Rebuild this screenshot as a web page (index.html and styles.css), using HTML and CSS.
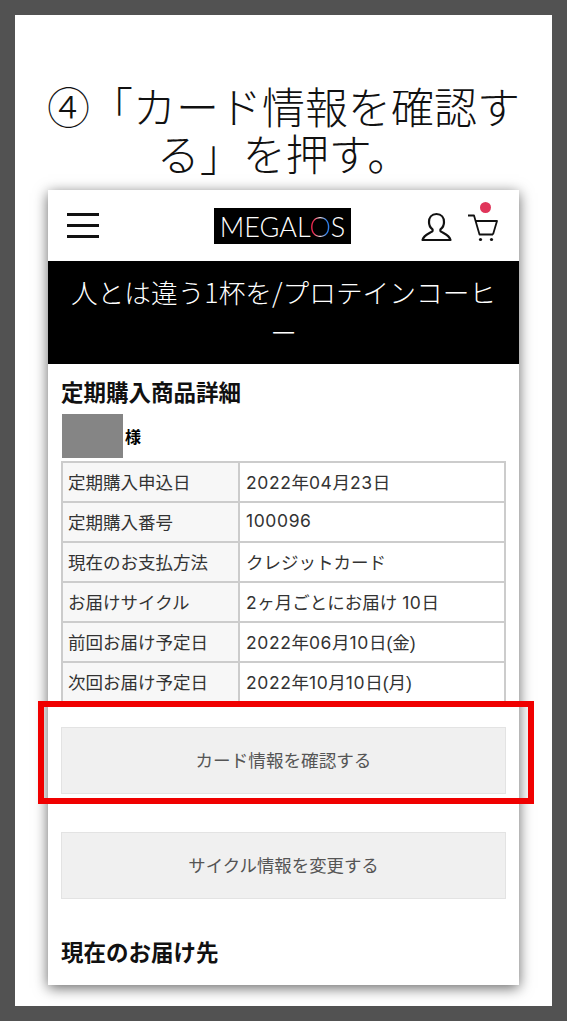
FILE: index.html
```html
<!DOCTYPE html>
<html lang="ja">
<head>
    <meta charset="UTF-8">
    <meta name="viewport" content="width=device-width, initial-scale=1.0">
    <title>カード情報を確認する</title>
    <link rel="stylesheet" href="styles.css">
</head>
<body>
<div class="slide">
    <h1 class="slide-title">④「カード情報を確認する」を押す。</h1>

    <div class="phone">
        <header class="site-header">
            <div class="menu-icon"><span></span><span></span><span></span></div>
            <div class="logo">MEGAL<span class="logo-o">O</span>S</div>
            <div class="header-icons">
                <svg class="user-icon" width="31" height="30" viewBox="0 0 31 30" fill="none" stroke="#111" stroke-width="2.2" stroke-linejoin="round">
                    <path d="M15.5 2C10.500 2 8 5.800 8 10c0 3.200 1.400 5.700 3.300 7.200.5.400.5 1.800-.3 2.400C7.500 21.800 2.800 23 1.500 28h28c-1.300-5-6-6.200-9.500-8.400-.8-.6-.8-2-.3-2.400C21.600 15.700 23 13.200 23 10c0-4.200-2.500-8-7.500-8z"/>
                </svg>
                <div class="cart">
                    <span class="cart-dot"></span>
                    <svg width="31" height="28" viewBox="0 0 31 28" fill="none" stroke="#111" stroke-width="1.8" stroke-linejoin="round">
                        <path d="M1 1.500h6L12.500 20.500H26"/>
                        <path d="M8.500 7H30L26 20.500"/>
                        <circle cx="13.500" cy="25.500" r="1.600" fill="#111" stroke="none"/>
                        <circle cx="24.500" cy="25.500" r="1.600" fill="#111" stroke="none"/>
                    </svg>
                </div>
            </div>
        </header>

        <div class="page-band">人とは違う1杯を/プロテインコーヒー</div>

        <div class="content">
            <h2 class="section-title">定期購入商品詳細</h2>
            <div class="customer">
                <span class="name-mask"></span>
                <span class="customer-suffix">様</span>
            </div>

            <table class="detail-table">
                <tr><th>定期購入申込日</th><td><span class="num">2022</span>年<span class="num">04</span>月<span class="num">23</span>日</td></tr>
                <tr><th>定期購入番号</th><td><span class="num">100096</span></td></tr>
                <tr><th>現在のお支払方法</th><td>クレジットカード</td></tr>
                <tr><th>お届けサイクル</th><td><span class="num">2</span>ヶ月ごとにお届け <span class="num">10</span>日</td></tr>
                <tr><th>前回お届け予定日</th><td><span class="num">2022</span>年<span class="num">06</span>月<span class="num">10</span>日(金)</td></tr>
                <tr><th>次回お届け予定日</th><td><span class="num">2022</span>年<span class="num">10</span>月<span class="num">10</span>日(月)</td></tr>
            </table>

            <div class="btn first-btn">カード情報を確認する</div>
            <div class="btn second-btn">サイクル情報を変更する</div>

            <h2 class="section-title address-title">現在のお届け先</h2>
        </div>
    </div>

    <div class="highlight"></div>
</div>
</body>
</html>
```

FILE: styles.css
```css
* {
    box-sizing: border-box;
}
body {
    margin: 0;
    background-color: #525252;
    font-family: "Liberation Sans", "Noto Sans CJK JP", sans-serif;
}
.slide {
    position: relative;
    width: 537px;
    height: 991px;
    margin: 15px 0 15px 15px;
    padding-top: 67px;
    background: #fff;
}
.slide-title {
    margin: 0 30px;
    font-family: "Noto Sans CJK JP", sans-serif;
    font-size: 43px;
    font-weight: 300;
    line-height: 47px;
    text-align: center;
    color: #111;
}
.phone {
    height: 795px;
    margin: 14px 33px 0;
    background: #fff;
    overflow: hidden;
    box-shadow: 0 3px 13px rgba(0, 0, 0, 0.6);
}
.site-header {
    display: flex;
    align-items: center;
    justify-content: space-between;
    height: 71px;
    padding: 0 21px 0 19px;
}
.menu-icon {
    display: flex;
    flex-direction: column;
    gap: 8px;
    width: 32px;
}
.menu-icon span {
    height: 3px;
    background: #111;
}
.logo {
    width: 137px;
    height: 36px;
    margin-left: 45px;
    background: #000;
    color: #fff;
    font-family: Lato, sans-serif;
    font-weight: 300;
    font-size: 27px;
    line-height: 38px;
    text-align: center;
}
.logo-o {
    background: linear-gradient(90deg, #f0284f 20%, #fbe4e8 50%, #2f7fea 80%);
    -webkit-background-clip: text;
    background-clip: text;
    color: transparent;
}
.header-icons {
    display: flex;
    align-items: flex-end;
    gap: 15px;
    padding-top: 3px;
}
.cart {
    position: relative;
    line-height: 0;
}
.cart-dot {
    position: absolute;
    top: -12px;
    left: 13px;
    width: 11px;
    height: 11px;
    border-radius: 50%;
    background: #e0355a;
}
.page-band {
    height: 103px;
    padding: 11px 20px 0;
    background: #000;
    color: #fff;
    font-family: "Noto Sans CJK JP", sans-serif;
    font-size: 26.700px;
    font-weight: 300;
    line-height: 40px;
    text-align: center;
}
.content {
    padding: 0 13px;
}
.section-title {
    margin: 0;
    padding-top: 13px;
    font-size: 22.500px;
    font-weight: 700;
    line-height: 33px;
    color: #111;
}
.customer {
    display: flex;
    align-items: center;
    height: 44px;
    margin-top: 4px;
}
.name-mask {
    width: 61px;
    height: 44px;
    margin-left: 1px;
    background: #858585;
}
.customer-suffix {
    margin: 0 0 0 2px;
    font-size: 16px;
    font-weight: 700;
}
.detail-table {
    width: 445px;
    margin-top: 3px;
    border-collapse: collapse;
    border: 2px solid #ccc;
    table-layout: fixed;
}
.detail-table th,
.detail-table td {
    height: 40px;
    padding: 0 6px 2px;
    border: 2px solid #ccc;
    font-size: 17.500px;
    font-weight: 400;
    text-align: left;
    color: #333;
}
.detail-table th {
    width: 177px;
    padding: 0 5px 2px;
    background: #f7f7f7;
}
.num {
    font-family: Inter, sans-serif;
    letter-spacing: 0.6px;
}
.btn {
    height: 67px;
    background: #f0f0f0;
    border: 1px solid #e3e3e3;
    color: #555;
    font-size: 17.600px;
    line-height: 66px;
    text-align: center;
}
.first-btn {
    margin-top: 24px;
}
.second-btn {
    margin-top: 38px;
    font-size: 17.400px;
}
.address-title {
    margin-top: 25px;
}
.highlight {
    position: absolute;
    left: 23px;
    top: 686px;
    width: 496px;
    height: 103px;
    border: 6px solid #f00000;
}
```
